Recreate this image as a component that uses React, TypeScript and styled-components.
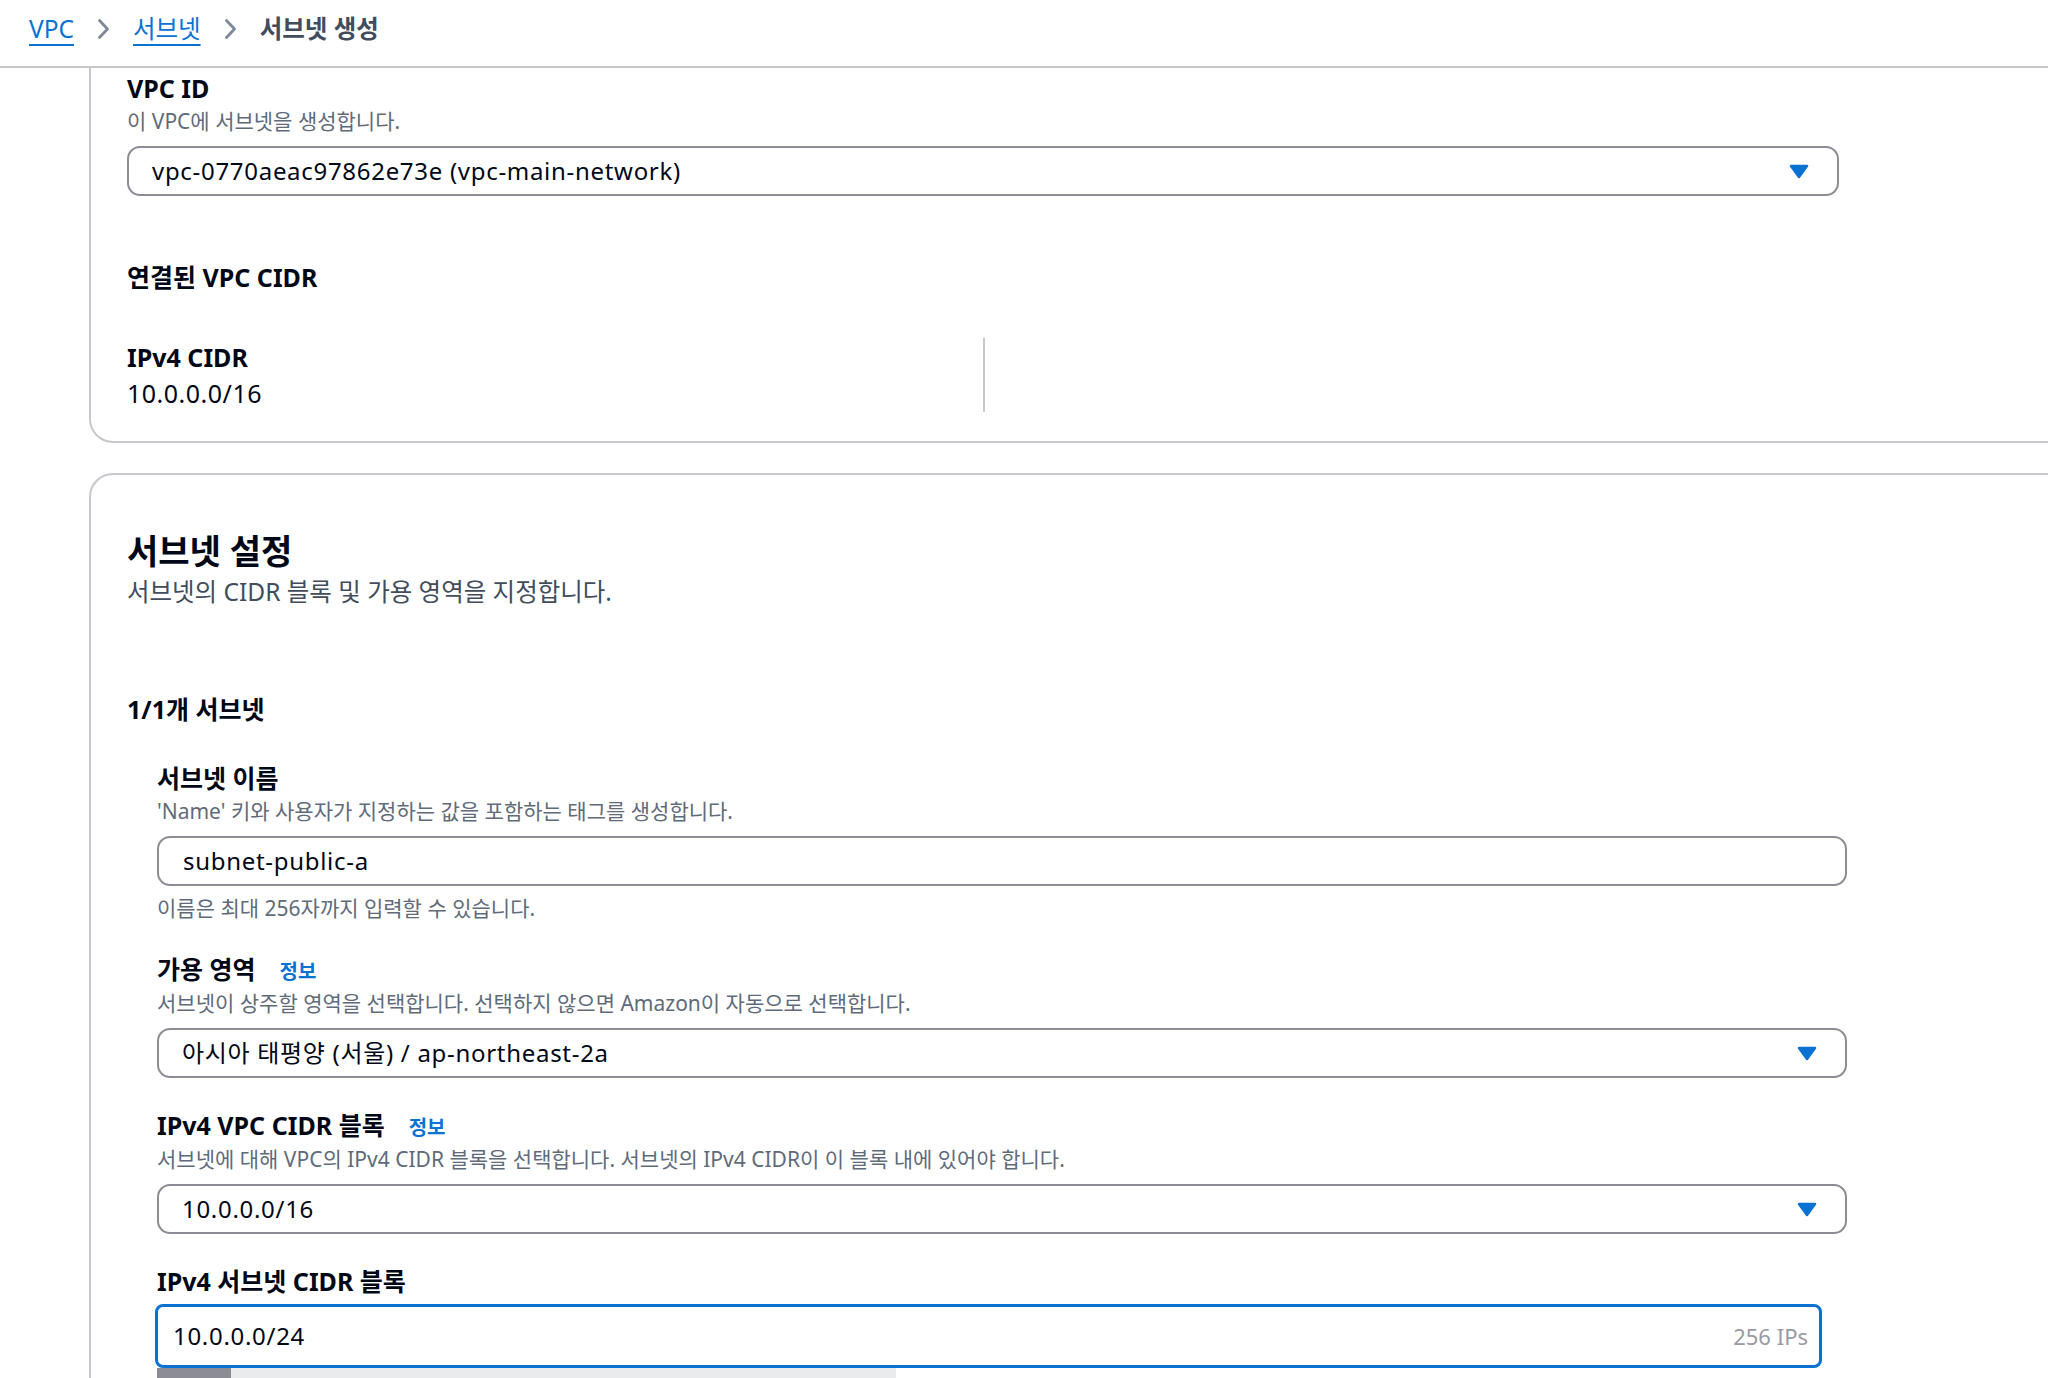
import styled, { createGlobalStyle, css } from 'styled-components'

const GlobalStyle = createGlobalStyle`
  * { box-sizing: border-box; }
  html, body {
    margin: 0;
    padding: 0;
    background: #ffffff;
  }
  body {
    font-family: "Noto Sans", "Noto Sans CJK KR", sans-serif;
    color: #000716;
    overflow: hidden;
  }
`

const ChevronIcon = () => (
  <svg width="13" height="22" viewBox="0 0 13 22" fill="none">
    <polyline
      points="2.5,2.5 10.5,11 2.5,19.5"
      stroke="#7d8998"
      strokeWidth="2.8"
      strokeLinecap="round"
      strokeLinejoin="round"
    />
  </svg>
)

const CaretIcon = () => (
  <svg width="20" height="15" viewBox="0 0 20 15">
    <path
      d="M2 2h16l-8 11z"
      fill="#0972d3"
      stroke="#0972d3"
      strokeWidth="2.5"
      strokeLinejoin="round"
    />
  </svg>
)

type FieldProps = {
  label: string
  info?: boolean
  description?: string
  constraint?: string
  children: React.ReactNode
}

const Field = ({ label, info, description, constraint, children }: FieldProps) => (
  <FieldWrap>
    <LabelRow>
      <Label>{label}</Label>
      {info && <InfoLink>정보</InfoLink>}
    </LabelRow>
    {description && <Description>{description}</Description>}
    <Control $afterDescription={!!description}>{children}</Control>
    {constraint && <Constraint>{constraint}</Constraint>}
  </FieldWrap>
)

const SelectBox = ({ value }: { value: string }) => (
  <Select>
    <ControlText>{value}</ControlText>
    <CaretIcon />
  </Select>
)

const usedIps = 256
const rangeFill = 10

const App = () => {
  return (
    <>
      <GlobalStyle />
      <Header>
        <Crumb>VPC</Crumb>
        <ChevronIcon />
        <Crumb>서브넷</Crumb>
        <ChevronIcon />
        <Crumb $current>서브넷 생성</Crumb>
      </Header>

      <Main>
        <Card $continued>
          <Content>
            <Field label="VPC ID" description="이 VPC에 서브넷을 생성합니다.">
              <SelectBox value="vpc-0770aeac97862e73e (vpc-main-network)" />
            </Field>

            <SectionTitle>연결된 VPC CIDR</SectionTitle>

            <KeyValueGrid>
              <KeyValueColumn>
                <KeyLabel>IPv4 CIDR</KeyLabel>
                <KeyValue>10.0.0.0/16</KeyValue>
              </KeyValueColumn>
              <KeyValueColumn $divided />
            </KeyValueGrid>
          </Content>
        </Card>

        <Card>
          <Content>
            <Heading>서브넷 설정</Heading>
            <HeadingDescription>서브넷의 CIDR 블록 및 가용 영역을 지정합니다.</HeadingDescription>

            <GroupTitle>1/1개 서브넷</GroupTitle>

            <SubnetFields>
              <Field
                label="서브넷 이름"
                description="'Name' 키와 사용자가 지정하는 값을 포함하는 태그를 생성합니다."
                constraint="이름은 최대 256자까지 입력할 수 있습니다."
              >
                <TextInput>
                  <ControlText>subnet-public-a</ControlText>
                </TextInput>
              </Field>

              <Field
                label="가용 영역"
                info
                description="서브넷이 상주할 영역을 선택합니다. 선택하지 않으면 Amazon이 자동으로 선택합니다."
              >
                <SelectBox value="아시아 태평양 (서울) / ap-northeast-2a" />
              </Field>

              <Field
                label="IPv4 VPC CIDR 블록"
                info
                description="서브넷에 대해 VPC의 IPv4 CIDR 블록을 선택합니다. 서브넷의 IPv4 CIDR이 이 블록 내에 있어야 합니다."
              >
                <SelectBox value="10.0.0.0/16" />
              </Field>

              <Field label="IPv4 서브넷 CIDR 블록">
                <CidrInput>
                  <ControlText>10.0.0.0/24</ControlText>
                  <IpCount>{usedIps} IPs</IpCount>
                </CidrInput>
                <RangeBar>
                  <RangeFill style={{ width: `${rangeFill}%` }} />
                </RangeBar>
              </Field>
            </SubnetFields>
          </Content>
        </Card>
      </Main>
    </>
  )
}

export default App

const Header = styled.header`
  height: 68px;
  display: flex;
  align-items: center;
  gap: 23px;
  padding: 0 0 8px 29px;
  border-bottom: 2px solid #c6c6cd;
  background: #ffffff;
`

const Crumb = styled.span<{ $current?: boolean }>`
  font-size: 24.5px;
  line-height: 32px;
  color: #0972d3;
  text-decoration: underline;
  text-decoration-thickness: 2px;
  text-underline-offset: 6px;

  ${(p) =>
    p.$current &&
    css`
      color: #414d5c;
      font-weight: 700;
      text-decoration: none;
    `}
`

const Main = styled.main`
  display: flex;
  flex-direction: column;
  gap: 30px;
  padding-left: 89px;
`

const Card = styled.section<{ $continued?: boolean }>`
  margin-right: -80px;
  padding: 56px 0 29px 36px;
  border: 2px solid #c6c6cd;
  border-radius: 24px;
  background: #ffffff;

  ${(p) =>
    p.$continued &&
    css`
      padding-top: 4px;
      border-top: none;
      border-top-left-radius: 0;
      border-top-right-radius: 0;
    `}
`

const Content = styled.div`
  width: 1712px;
  display: flex;
  flex-direction: column;
`

const FieldWrap = styled.div`
  display: flex;
  flex-direction: column;
`

const LabelRow = styled.div`
  display: flex;
  align-items: baseline;
  gap: 24px;
`

const Label = styled.span`
  font-size: 25px;
  line-height: 32px;
  font-weight: 700;
  color: #000716;
`

const InfoLink = styled.span`
  font-size: 20px;
  line-height: 28px;
  font-weight: 700;
  color: #0972d3;
`

const Description = styled.div`
  margin-top: 3px;
  font-size: 21px;
  line-height: 28px;
  color: #5f6b7a;
`

const Constraint = styled(Description)`
  margin-top: 8px;
`

const Control = styled.div<{ $afterDescription: boolean }>`
  margin-top: ${(p) => (p.$afterDescription ? '11px' : '7px')};
`

const ControlText = styled.span`
  font-size: 24px;
  line-height: 32px;
  letter-spacing: 0.7px;
  color: #000716;
  white-space: nowrap;
`

const Select = styled.div`
  height: 50px;
  display: flex;
  align-items: center;
  justify-content: space-between;
  padding: 0 28px 0 23px;
  border: 2px solid #8c8c94;
  border-radius: 13px;
  background: #ffffff;
`

const TextInput = styled.div`
  height: 50px;
  display: flex;
  align-items: center;
  padding: 0 24px;
  border: 2px solid #8c8c94;
  border-radius: 13px;
  background: #ffffff;
`

const CidrInput = styled.div`
  width: 1667px;
  height: 64px;
  margin-left: -2px;
  display: flex;
  align-items: center;
  justify-content: space-between;
  padding: 0 11px 0 15px;
  border: 3px solid #0972d3;
  border-radius: 8px;
  background: #ffffff;
`

const IpCount = styled.span`
  font-size: 22px;
  line-height: 30px;
  color: #9a9aa2;
`

const RangeBar = styled.div`
  width: 739px;
  height: 14px;
  display: flex;
  background: #e9ebed;
`

const RangeFill = styled.div`
  height: 100%;
  background: #8c8c94;
`

const SectionTitle = styled.h3`
  margin: 65px 0 0;
  font-size: 25px;
  line-height: 32px;
  font-weight: 700;
  color: #000716;
`

const KeyValueGrid = styled.div`
  margin-top: 45px;
  display: grid;
  grid-template-columns: 1fr 1fr;
`

const KeyValueColumn = styled.div<{ $divided?: boolean }>`
  padding: 3px 0;
  display: flex;
  flex-direction: column;
  gap: 4px;

  ${(p) =>
    p.$divided &&
    css`
      border-left: 2px solid #c6c6cd;
    `}
`

const KeyLabel = styled.span`
  font-size: 25px;
  line-height: 32px;
  font-weight: 700;
  color: #000716;
`

const KeyValue = styled.span`
  font-size: 25px;
  line-height: 32px;
  letter-spacing: 0.5px;
  color: #000716;
`

const Heading = styled.h2`
  margin: 0;
  font-size: 34px;
  line-height: 40px;
  font-weight: 700;
  color: #000716;
`

const HeadingDescription = styled.p`
  margin: 5px 0 0;
  font-size: 24.5px;
  line-height: 32px;
  color: #414d5c;
`

const GroupTitle = styled.h3`
  margin: 85px 0 0;
  font-size: 25px;
  line-height: 32px;
  font-weight: 700;
  color: #000716;
`

const SubnetFields = styled.div`
  width: 1720px;
  margin-top: 37px;
  padding-left: 30px;
  display: flex;
  flex-direction: column;
  gap: 31px;
`
